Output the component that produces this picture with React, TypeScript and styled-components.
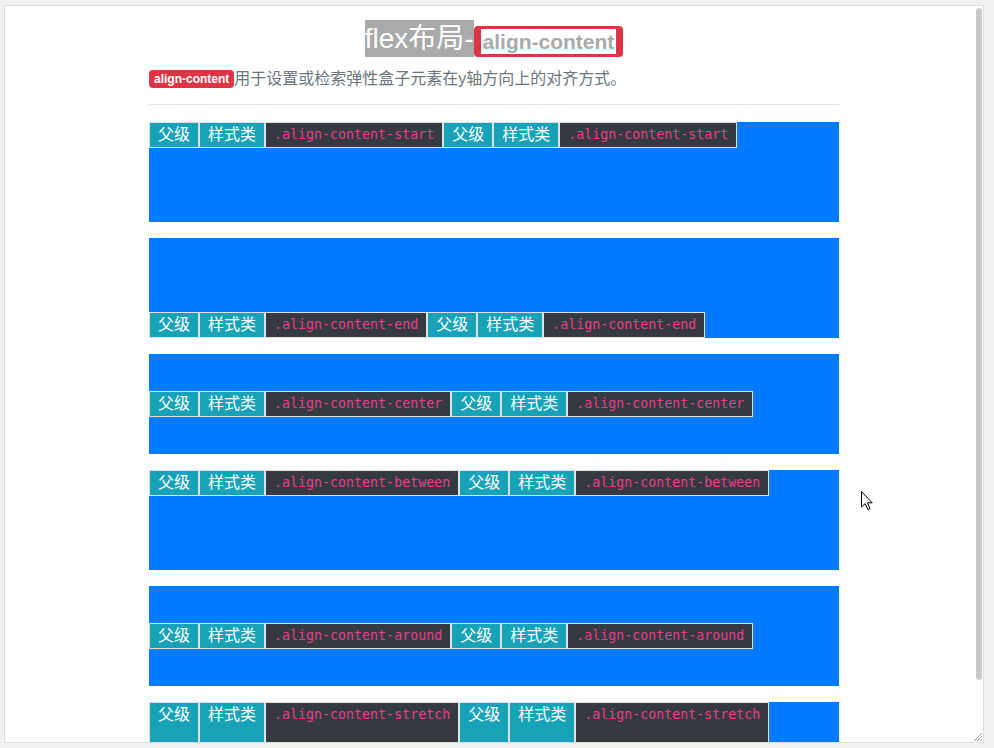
import styled, { createGlobalStyle } from "styled-components";

const GlobalStyle = createGlobalStyle`
  html, body {
    margin: 0;
    background: #f1f1f1;
    font-family: "Liberation Sans", "Noto Sans CJK SC", sans-serif;
  }
`;

type Align = "start" | "end" | "center" | "between" | "around" | "stretch";

const alignMap: Record<Align, string> = {
  start: "flex-start",
  end: "flex-end",
  center: "center",
  between: "space-between",
  around: "space-around",
  stretch: "stretch",
};

const rows: Align[] = ["start", "end", "center", "between", "around", "stretch"];

const Frame = styled.div`
  position: relative;
  box-sizing: border-box;
  margin: 5px 0 0 4px;
  width: 980px;
  height: 738px;
  border: 1px solid #dcdcdc;
  background: #fff;
  overflow: hidden;
  box-shadow: 0 3px 0 #e4e4e4;
`;

const Container = styled.div`
  width: 690px;
  margin: 0 auto;
  padding-top: 14px;
`;

const Title = styled.h2`
  display: flex;
  justify-content: center;
  align-items: flex-end;
  margin: 0 0 10px;
  font-size: 28px;
  line-height: 37px;
  font-weight: normal;
`;

const TitleText = styled.span`
  background: #aaa;
  color: #fff;
`;

const TitleBadge = styled.span`
  display: inline-block;
  padding: 3px 7px;
  border-radius: 4px;
  background: #dc3545;
`;

const TitleBadgeInner = styled.span`
  display: block;
  padding: 0 2px;
  background: #fff;
  color: #aaa;
  font-weight: bold;
  font-size: 21px;
  line-height: 25px;
`;

const Lead = styled.p`
  display: flex;
  align-items: center;
  margin: 0;
  font-size: 16px;
  line-height: 24px;
  color: #6c757d;
`;

const SmallBadge = styled.span`
  display: inline-block;
  padding: 2px 5px;
  border-radius: 4px;
  background: #dc3545;
  color: #fff;
  font-size: 12px;
  line-height: 14px;
  font-weight: bold;
`;

const Rule = styled.hr`
  margin: 13px 0 17px;
  border: 0;
  border-top: 1px solid #e5e5e5;
`;

const Box = styled.div<{ $align: Align }>`
  display: flex;
  flex-wrap: wrap;
  align-content: ${(p) => alignMap[p.$align]};
  height: 100px;
  margin-bottom: 16px;
  background: #007bff;
`;

const Item = styled.span<{ $dark?: boolean; $stretch?: boolean }>`
  height: ${(p) => (p.$stretch ? "auto" : "24px")};
  padding: 0 8px;
  border: 1px solid #dee2e6;
  background: ${(p) => (p.$dark ? "#343a40" : "#17a2b8")};
  color: #fff;
  font-size: 16px;
  line-height: 24px;
  overflow: hidden;
`;

const Code = styled.code`
  display: block;
  font-family: "DejaVu Sans Mono", "Liberation Mono", monospace;
  font-size: 13.3px;
  line-height: 24px;
  color: #e83e8c;
`;

const Thumb = styled.div`
  position: absolute;
  top: 2px;
  right: 1px;
  width: 6px;
  height: 672px;
  border-radius: 3px;
  background: #c8c8c8;
`;

const Grip = styled.svg`
  position: absolute;
  right: 0;
  bottom: 0;
`;

const Pointer = styled.svg`
  position: absolute;
  left: 856px;
  top: 485px;
`;

const Group = ({ name }: { name: Align }) => {
  const stretch = name === "stretch";
  return (
    <>
      <Item $stretch={stretch}>父级</Item>
      <Item $stretch={stretch}>样式类</Item>
      <Item $dark $stretch={stretch}>
        <Code>.align-content-{name}</Code>
      </Item>
    </>
  );
};

export default function App() {
  return (
    <>
      <GlobalStyle />
      <Frame>
        <Container>
          <Title>
            <TitleText>flex布局-</TitleText>
            <TitleBadge>
              <TitleBadgeInner>align-content</TitleBadgeInner>
            </TitleBadge>
          </Title>
          <Lead>
            <SmallBadge>align-content</SmallBadge>
            用于设置或检索弹性盒子元素在y轴方向上的对齐方式。
          </Lead>
          <Rule />
          {rows.map((r) => (
            <Box key={r} $align={r}>
              <Group name={r} />
              <Group name={r} />
            </Box>
          ))}
        </Container>
        <Thumb />
        <Grip width="12" height="12" viewBox="0 0 12 12">
          <path d="M11 3 L3 11 M11 6 L6 11 M11 9 L9 11" stroke="#a0a0a0" strokeWidth="1" />
        </Grip>
        <Pointer width="13" height="21" viewBox="0 0 13 21">
          <path
            d="M0.5 0.5 L0.5 16 L4.2 12.6 L6.8 18.6 L9 17.6 L6.4 11.8 L11.2 11.8 Z"
            fill="#fff"
            stroke="#000"
            strokeWidth="1"
            strokeLinejoin="round"
          />
        </Pointer>
      </Frame>
    </>
  );
}
